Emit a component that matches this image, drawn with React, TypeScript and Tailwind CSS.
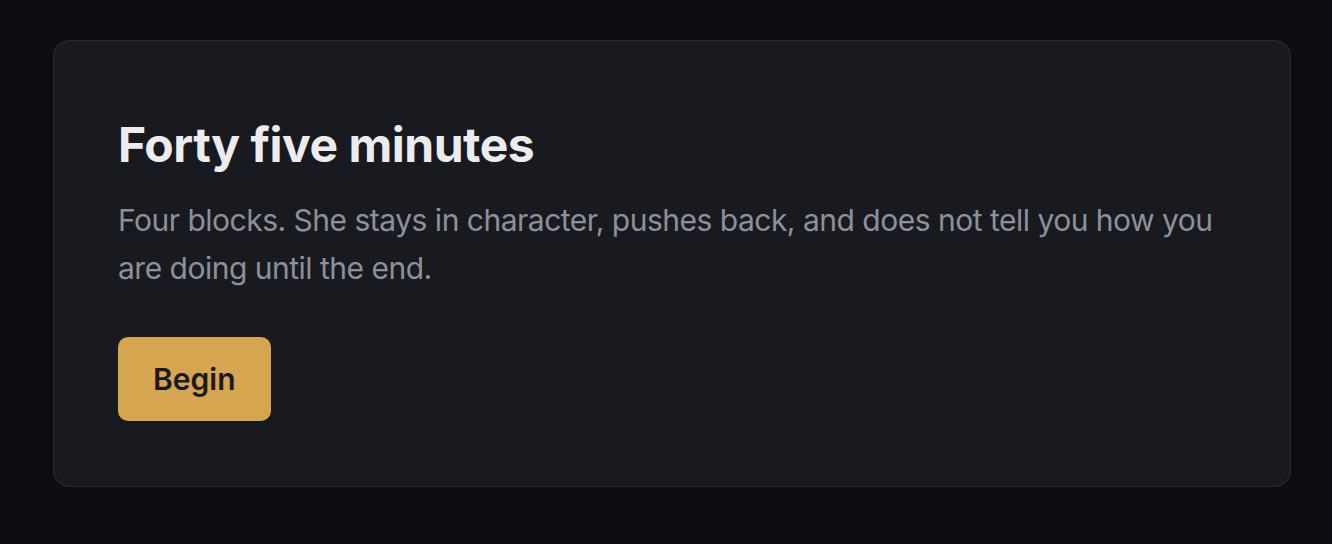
export default function App() {
  return (
    <div
      className="min-h-screen bg-[#0c0d10] pt-[40px] pl-[53px]"
      style={{ fontFamily: "Inter, 'Noto Sans', sans-serif" }}
    >
      <div className="w-[1238px] rounded-[16px] border border-[#2a2c31] bg-[#181a1f] px-[64px] pt-[75px] pb-[65px]">
        <h1 className="text-[48px] font-bold leading-[58px] tracking-[-0.5px] text-[#ececee]">
          Forty five minutes
        </h1>
        <p className="mt-[22px] text-[30px] leading-[48px] tracking-[-0.5px] text-[#8d9099]">
          Four blocks. She stays in character, pushes back, and does not tell you how you are doing until the end.
        </p>
        <button className="mt-[45px] h-[84px] rounded-[10px] bg-[#d6a54f] px-[35px] text-[30px] font-semibold text-[#1a1a1a]">
          Begin
        </button>
      </div>
    </div>
  );
}
